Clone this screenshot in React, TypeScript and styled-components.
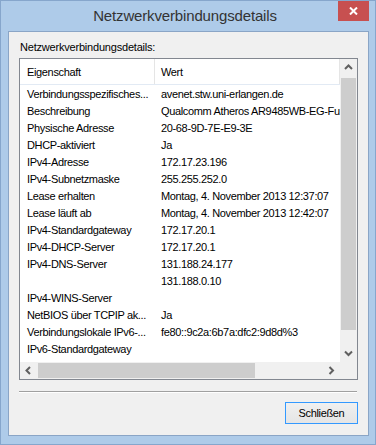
import React from "react";
import styled, { createGlobalStyle } from "styled-components";

const rows: [string, string][] = [
  ["Verbindungsspezifisches...", "avenet.stw.uni-erlangen.de"],
  ["Beschreibung", "Qualcomm Atheros AR9485WB-EG-Funknetzwerkadapter"],
  ["Physische Adresse", "20-68-9D-7E-E9-3E"],
  ["DHCP-aktiviert", "Ja"],
  ["IPv4-Adresse", "172.17.23.196"],
  ["IPv4-Subnetzmaske", "255.255.252.0"],
  ["Lease erhalten", "Montag, 4. November 2013 12:37:07"],
  ["Lease läuft ab", "Montag, 4. November 2013 12:42:07"],
  ["IPv4-Standardgateway", "172.17.20.1"],
  ["IPv4-DHCP-Server", "172.17.20.1"],
  ["IPv4-DNS-Server", "131.188.24.177"],
  ["", "131.188.0.10"],
  ["IPv4-WINS-Server", ""],
  ["NetBIOS über TCPIP ak...", "Ja"],
  ["Verbindungslokale IPv6-...", "fe80::9c2a:6b7a:dfc2:9d8d%3"],
  ["IPv6-Standardgateway", ""],
  ["IPv6-DNS-Server", ""],
];

// little grey chevrons of the win8 scrollbar buttons
const Chevron = ({ dir }: { dir: "up" | "down" | "left" | "right" }) => {
  const pts = {
    up: "1,5 4.5,1.5 8,5",
    down: "1,1.5 4.5,5 8,1.5",
    left: "5,1 1.5,4.5 5,8",
    right: "1.5,1 5,4.5 1.5,8",
  }[dir];
  const vertical = dir === "up" || dir === "down";
  return (
    <svg width={vertical ? 9 : 7} height={vertical ? 7 : 9}>
      <polyline points={pts} fill="none" stroke="#606060" strokeWidth="2" />
    </svg>
  );
};

const App = () => {
  return (
    <>
      <Global />
      <Window>
        <TitleBar>
          <span />
          <Title>Netzwerkverbindungsdetails</Title>
          <CloseButton>
            <svg width="9" height="8">
              <path d="M1 0.5 L8 7.5 M8 0.5 L1 7.5" stroke="#fff" strokeWidth="2" />
            </svg>
          </CloseButton>
        </TitleBar>
        <Client>
          <Label>Netzwerkverbindungsdetails:</Label>
          <ListBox>
            <ListContent>
              <Header>
                <HeadCell $first>Eigenschaft</HeadCell>
                <HeadCell>Wert</HeadCell>
              </Header>
              {rows.map(([k, v], i) => (
                <Row key={i}>
                  <NameCell>{k}</NameCell>
                  <ValueCell>{v}</ValueCell>
                </Row>
              ))}
            </ListContent>
            <VScroll>
              <ArrowBtn>
                <Chevron dir="up" />
              </ArrowBtn>
              <VTrack>
                <VThumb />
              </VTrack>
              <ArrowBtn>
                <Chevron dir="down" />
              </ArrowBtn>
            </VScroll>
            <HScroll>
              <ArrowBtn>
                <Chevron dir="left" />
              </ArrowBtn>
              <HTrack>
                <HThumb />
              </HTrack>
              <ArrowBtn>
                <Chevron dir="right" />
              </ArrowBtn>
            </HScroll>
            <Corner />
          </ListBox>
          <Separator />
          <Footer>
            <Button>Schließen</Button>
          </Footer>
        </Client>
      </Window>
    </>
  );
};

export default App;

const Global = createGlobalStyle`
  html, body {
    margin: 0;
    padding: 0;
    background: #aecbe9;
  }
  * {
    box-sizing: border-box;
  }
`;

const Window = styled.div`
  width: 376px;
  height: 445px;
  background: #aecbe9;
  border: 1px solid #86a6cc;
  display: flex;
  flex-direction: column;
  padding: 0 6px 8px 7px;
  font-family: "Liberation Sans", Arial, sans-serif;
  color: #000;
`;

const TitleBar = styled.div`
  height: 30px;
  display: grid;
  grid-template-columns: 1fr auto 1fr;
  margin: 0 -6px 0 -7px;
  padding-right: 6px;
`;

const Title = styled.div`
  font-size: 15px;
  letter-spacing: -0.15px;
  color: #333;
  padding-top: 6px;
`;

const CloseButton = styled.div`
  justify-self: end;
  width: 31px;
  height: 20px;
  background: #c75050;
  display: flex;
  align-items: center;
  justify-content: center;
`;

const Client = styled.div`
  flex: 1;
  background: #f0f0f0;
  border: 1px solid #8aa5c6;
  padding: 9px 10px 0 10px;
  display: flex;
  flex-direction: column;
`;

const Label = styled.div`
  font-size: 11px;
  letter-spacing: -0.2px;
  line-height: 13px;
  margin-left: 1px;
  margin-bottom: 4px;
`;

const ListBox = styled.div`
  width: 339px;
  height: 322px;
  border: 1px solid #828790;
  background: #fff;
  display: grid;
  grid-template-columns: 320px 17px;
  grid-template-rows: 303px 17px;
`;

const ListContent = styled.div`
  overflow: hidden;
  font-size: 11px;
  letter-spacing: -0.35px;
  white-space: nowrap;
`;

const Header = styled.div`
  height: 26px;
  display: flex;
  border-bottom: 1px solid #e2eaf4;
`;

const HeadCell = styled.div<{ $first?: boolean }>`
  display: flex;
  align-items: center;
  width: ${(p) => (p.$first ? "135px" : "auto")};
  padding-left: ${(p) => (p.$first ? "7px" : "6px")};
  border-right: 1px solid #e5e5e5;
  flex: ${(p) => (p.$first ? "none" : "1")};
`;

const Row = styled.div`
  height: 17px;
  display: flex;
  align-items: center;
`;

const NameCell = styled.div`
  width: 134px;
  flex: none;
  padding-left: 7px;
  overflow: hidden;
`;

const ValueCell = styled.div`
  padding-left: 7px;
`;

const VScroll = styled.div`
  background: #f0f0f0;
  display: flex;
  flex-direction: column;
`;

const HScroll = styled.div`
  background: #f0f0f0;
  display: flex;
`;

const ArrowBtn = styled.div`
  width: 17px;
  height: 17px;
  flex: none;
  display: flex;
  align-items: center;
  justify-content: center;
`;

const VTrack = styled.div`
  flex: 1;
  padding: 2px 1px 0 1px;
`;

const VThumb = styled.div`
  height: 252px;
  background: #cdcdcd;
`;

const HTrack = styled.div`
  flex: 1;
  padding: 1px 0 1px 1px;
`;

const HThumb = styled.div`
  width: 217px;
  height: 15px;
  background: #cdcdcd;
`;

const Corner = styled.div`
  background: #f0f0f0;
`;

const Separator = styled.div`
  margin-top: 11px;
  height: 2px;
  width: 338px;
  border-top: 1px solid #a0a0a0;
  border-bottom: 1px solid #fff;
`;

const Footer = styled.div`
  display: flex;
  justify-content: flex-end;
  margin-top: 9px;
  width: 339px;
`;

const Button = styled.div`
  width: 73px;
  height: 22px;
  border: 1px solid #3399ff;
  background: linear-gradient(#f0f0f0, #e5e5e5);
  font-size: 11px;
  letter-spacing: -0.35px;
  display: flex;
  align-items: center;
  justify-content: center;
`;
